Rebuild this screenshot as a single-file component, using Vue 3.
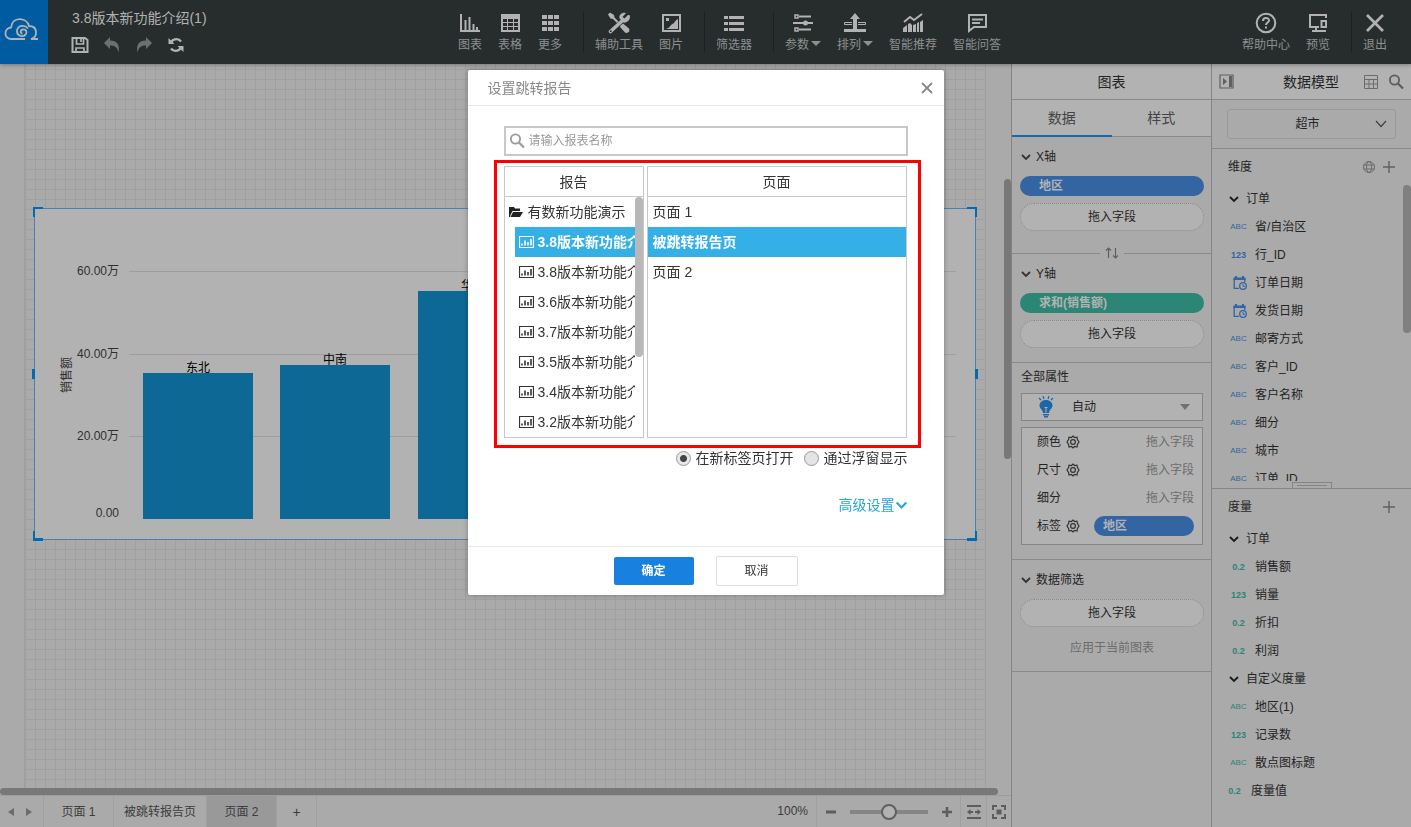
<script setup>
import { ref } from 'vue'

const keyword = ref('')
const openMode = ref('tab')
const model = ref('超市')
const mark = ref('自动')
const zoomLevel = ref(50)

const tools = [
  { label: '图表', icon: 'chart' },
  { label: '表格', icon: 'table' },
  { label: '更多', icon: 'more' },
  { divider: true },
  { label: '辅助工具', icon: 'wrench' },
  { label: '图片', icon: 'image' },
  { divider: true },
  { label: '筛选器', icon: 'filter' },
  { divider: true },
  { label: '参数', icon: 'params', caret: true },
  { label: '排列', icon: 'arrange', caret: true },
  { label: '智能推荐', icon: 'smart' },
  { label: '智能问答', icon: 'chat' },
]
const rightTools = [
  { label: '帮助中心', icon: 'help' },
  { label: '预览', icon: 'preview' },
  { divider: true },
  { label: '退出', icon: 'exit' },
]
const gridLines = [
  { y: 63, label: '60.00万' },
  { y: 146, label: '40.00万' },
  { y: 228, label: '20.00万' },
]
const bars = [
  { name: '东北', x: 108, top: 164 },
  { name: '中南', x: 245, top: 156 },
  { name: '华东', x: 383, top: 82 },
]
const reports = [
  '3.8版本新功能介绍',
  '3.8版本新功能介绍',
  '3.6版本新功能介绍',
  '3.7版本新功能介绍',
  '3.5版本新功能介绍',
  '3.4版本新功能介绍',
  '3.2版本新功能介绍',
]
const pages = ['页面 1', '被跳转报告页', '页面 2']
const dimensions = [
  { type: 'ABC', name: '省/自治区' },
  { type: '123', name: '行_ID' },
  { type: 'date', name: '订单日期' },
  { type: 'date', name: '发货日期' },
  { type: 'ABC', name: '邮寄方式' },
  { type: 'ABC', name: '客户_ID' },
  { type: 'ABC', name: '客户名称' },
  { type: 'ABC', name: '细分' },
  { type: 'ABC', name: '城市' },
  { type: 'ABC', name: '订单_ID' },
]
const orderMeasures = [
  { type: '0.2', name: '销售额' },
  { type: '123', name: '销量' },
  { type: '0.2', name: '折扣' },
  { type: '0.2', name: '利润' },
]
const customMeasures = [
  { type: 'ABC', name: '地区(1)' },
  { type: '123', name: '记录数' },
  { type: 'ABC', name: '散点图标题' },
]
const shelves = [
  { name: '颜色', gear: true },
  { name: '尺寸', gear: true },
  { name: '细分', gear: false },
  { name: '标签', gear: true, field: '地区' },
]
</script>

<template>
  <svg class="defs" aria-hidden="true">
    <symbol id="i-chart" viewBox="0 0 22 22">
      <path d="M2 2v17h19" fill="none" stroke="currentColor" stroke-width="2" />
      <path d="M6.500 8v10M10.500 5v13M14.500 12v6M18 15v3" stroke="currentColor" stroke-width="2" />
    </symbol>
    <symbol id="i-table" viewBox="0 0 22 22">
      <path fill-rule="evenodd" fill="currentColor" d="M2 2h19v18H2zM4 7v3h4V7zM9 7v3h5V7zM15 7v3h4V7zM4 11v3h4v-3zM9 11v3h5v-3zM15 11v3h4v-3zM4 15v3h4v-3zM9 15v3h5v-3zM15 15v3h4v-3z" />
    </symbol>
    <symbol id="i-more" viewBox="0 0 22 22">
      <path fill="currentColor" d="M3 3h5v4H3zM9 3h5v4H9zM15 3h5v4h-5zM3 9h5v4H3zM9 9h5v4H9zM15 9h5v4h-5zM3 15h5v4H3zM9 15h5v4H9zM15 15h5v4h-5z" />
    </symbol>
    <symbol id="i-wrench" viewBox="0 0 22 22">
      <path d="M0 2.500 2 .5l4 2.500.5 2.500 4 4L9 11 5 7l-2.500-.5z" fill="currentColor" />
      <path d="m12.500 13.500 2.500-2 6 5c1.500 2.500-1.500 5.500-4 4l-5-5.500z" fill="currentColor" />
      <path d="m2.500 19.500 12-11" stroke="currentColor" stroke-width="3.600" stroke-linecap="round" />
      <path d="M20 3 16.500 6.500 14.500 5 18 1c-4-1.500-7.500 2-6.500 5.500l4 4C19 11.500 23.500 7 21.500 3z" fill="currentColor" />
      <circle cx="2.800" cy="19.200" r=".9" fill="#272d2d" />
    </symbol>
    <symbol id="i-image" viewBox="0 0 22 22">
      <path d="M3 3h17v16H3z" fill="none" stroke="currentColor" stroke-width="2" />
      <path d="M6 6h3v3H6zM5 17c2 0 4-1 6-4 1-1 2-1 3-2 1-2 2-3 4-4v10z" fill="currentColor" />
    </symbol>
    <symbol id="i-filter" viewBox="0 0 22 22">
      <path fill="currentColor" d="M1 4h4v3H1zM6 4h15v3H6zM1 10h4v3H1zM6 10h15v3H6zM1 16h4v3H1zM6 16h15v3H6z" />
    </symbol>
    <symbol id="i-params" viewBox="0 0 22 22">
      <path d="M7 4.500h12M1 11h9M16 11h5M7 17.500h12" stroke="currentColor" stroke-width="2" />
      <path d="M3 3h3v3H3zM3 16h3v3H3z" fill="none" stroke="currentColor" stroke-width="1.500" />
      <path d="M9 11h12" stroke="currentColor" stroke-width="2" />
      <circle cx="13.500" cy="11" r="2.500" fill="currentColor" />
    </symbol>
    <symbol id="i-arrange" viewBox="0 0 22 22">
      <path fill="currentColor" d="m11 1 5 6h-3v10h9v3H0v-3h9V7H6z" />
      <path d="M8 10.500H.500v2H8M14 10.500h7.500v2H14" fill="none" stroke="currentColor" />
    </symbol>
    <symbol id="i-smart" viewBox="0 0 22 22">
      <path d="m2 10 6-5 4 3 8-6" fill="none" stroke="currentColor" stroke-width="2" />
      <path fill="currentColor" d="M1 16l4-3v7H1zM6 12l2-1 2 2v7H6zM11 13l3-1v8h-3zM15 11l2-1v10h-2zM18 10l3-2v12h-3z" />
    </symbol>
    <symbol id="i-chat" viewBox="0 0 22 22">
      <path d="M3 3h17v12H8l-5 4z" fill="none" stroke="currentColor" stroke-width="2" />
      <path d="M6 7.500h11M6 11h8" stroke="currentColor" stroke-width="2" />
    </symbol>
    <symbol id="i-help" viewBox="0 0 22 22">
      <circle cx="11" cy="11" r="9.300" fill="none" stroke="currentColor" stroke-width="2" />
      <path d="M8 9c0-4 6-4 6-.5 0 2-3 2-3 4.500M11 14.500v2" fill="none" stroke="currentColor" stroke-width="2" />
    </symbol>
    <symbol id="i-preview" viewBox="0 0 22 22">
      <path d="M19 6V3H3v12h9M9 15v4M5 19h8" fill="none" stroke="currentColor" stroke-width="2" />
      <path d="M14.500 9H19v6h-4.500zM12 19h7" fill="none" stroke="currentColor" stroke-width="2" />
    </symbol>
    <symbol id="i-exit" viewBox="0 0 22 22">
      <path d="m3 3 16 16M19 3 3 19" stroke="currentColor" stroke-width="2.700" />
    </symbol>
    <symbol id="i-chevron" viewBox="0 0 10 10">
      <path d="m1 3 4 4 4-4" fill="none" stroke="currentColor" stroke-width="1.800" />
    </symbol>
    <symbol id="i-search" viewBox="0 0 16 16">
      <circle cx="6.500" cy="6" r="4.600" fill="none" stroke="currentColor" stroke-width="1.800" />
      <path d="m10 9.500 5 5" stroke="currentColor" stroke-width="2.200" />
    </symbol>
    <symbol id="i-plus" viewBox="0 0 12 12">
      <path d="M6 0v12M0 6h12" stroke="currentColor" stroke-width="1.400" />
    </symbol>
    <symbol id="i-date" viewBox="0 0 14 14">
      <path d="M6 12.400H1.200V3h10.600v3" fill="none" stroke="currentColor" stroke-width="1.300" />
      <path d="M.5 1.500H2V0h2v1.500h5V0h2v1.500h1.500V4H.5z" fill="currentColor" />
      <circle cx="10" cy="10" r="3.300" fill="none" stroke="currentColor" stroke-width="1.300" />
      <path d="M10 8v2.300h2" fill="none" stroke="currentColor" />
    </symbol>
    <symbol id="i-gear" viewBox="0 0 14 14">
      <path d="m7 1 1.500 1.500 2.500-.4.400 2.400L13 7l-1.600 2.500L11 12l-2.500-.5L7 13l-1.500-1.500L3 12l-.4-2.500L1 7l1.600-2.500.4-2.400 2.500.4z" fill="none" stroke="currentColor" stroke-width="1.200" />
      <circle cx="7" cy="7" r="2.400" fill="none" stroke="currentColor" stroke-width="1.200" />
    </symbol>
    <symbol id="i-report" viewBox="0 0 15 12">
      <path d="M.5.5h14v11H.5z" fill="none" stroke="currentColor" stroke-width="1.200" />
      <path d="M3 9.500v-2M6 9.500v-5M9 9.500V6M12 9.500V3" stroke="currentColor" stroke-width="1.600" />
    </symbol>
  </svg>

  <div class="app">
    <header class="topbar">
      <a class="logo" href="#" aria-label="首页">
        <svg width="36" height="24" viewBox="0 0 36 24" fill="none" stroke="#b2b2b2" stroke-width="1.800">
          <path d="M21 21H7.500C-.5 20.500-.5 10.500 7 9.500 8-1.500 22.500-1.500 25 8c8.500 0 9.500 10.500 2 13h7" />
          <path d="M24 10.500c-3-4-10-3.500-11 2-.5 5.500 6.500 7.500 9 3.500 1.500-2.500-.5-5-3-4.500-3 .5-3 4-.5 4" />
        </svg>
      </a>
      <div class="title-area">
        <div class="title">3.8版本新功能介绍(1)</div>
        <div class="quick">
          <button aria-label="保存">
            <svg width="18" height="18" viewBox="0 0 18 18" fill="none" stroke="#b2b2b2" stroke-width="2">
              <path d="M1.500 2H14l2.500 2v12h-15z" /><path d="M5.500 2v6h7V2M5 16v-4h8v4M10 3v3" stroke-width="1.700" />
            </svg>
          </button>
          <button aria-label="撤销">
            <svg width="18" height="18" viewBox="0 0 18 18"><path d="m1 7 6-6v3.500c7 0 10 4 8.500 12C14 11 12 9.500 7 9.500V13z" fill="#6c7070" /></svg>
          </button>
          <button aria-label="重做">
            <svg width="18" height="18" viewBox="0 0 18 18"><path d="m17 7-6-6v3.500c-7 0-10 4-8.500 12C4 11 6 9.500 11 9.500V13z" fill="#6c7070" /></svg>
          </button>
          <button aria-label="刷新">
            <svg width="18" height="18" viewBox="0 0 18 18">
              <path d="M4 8c0-5 7-6.500 10-2.500M14 10c0 5-7 6.500-10 2.500" fill="none" stroke="#b2b2b2" stroke-width="2.400" />
              <path d="M1.500 2v6h6zM16.500 16v-6h-6z" fill="#b2b2b2" />
            </svg>
          </button>
        </div>
      </div>
      <nav class="tools">
        <template v-for="(t, i) in tools" :key="i">
          <i v-if="t.divider" class="divider"></i>
          <button v-else class="tool">
            <svg width="22" height="22"><use :href="'#i-' + t.icon" /></svg>
            <span>{{ t.label }}<i v-if="t.caret" class="caret"></i></span>
          </button>
        </template>
      </nav>
      <nav class="tools right">
        <template v-for="(t, i) in rightTools" :key="i">
          <i v-if="t.divider" class="divider"></i>
          <button v-else class="tool">
            <svg width="22" height="22"><use :href="'#i-' + t.icon" /></svg>
            <span>{{ t.label }}</span>
          </button>
        </template>
      </nav>
    </header>

    <div class="body">
      <main class="workspace">
        <div class="canvas">
          <div class="sheet">
            <div class="widget">
              <svg class="plot" width="922" height="330">
                <g v-for="l in gridLines" :key="l.y">
                  <line x1="94" x2="921" :y1="l.y - 0.5" :y2="l.y - 0.5" stroke="#9e9e9e" />
                  <text x="84" :y="l.y + 3" text-anchor="end">{{ l.label }}</text>
                </g>
                <text x="84" y="308" text-anchor="end">0.00</text>
                <text transform="translate(36 166) rotate(-90)" text-anchor="middle">销售额</text>
                <g v-for="b in bars" :key="b.name">
                  <text class="cat" :x="b.x + 55" :y="b.top - 1" text-anchor="middle">{{ b.name }}</text>
                  <rect :x="b.x" :y="b.top" width="110" :height="310 - b.top" fill="#0d6895" />
                </g>
              </svg>
              <i class="handle tl"></i><i class="handle tr"></i><i class="handle bl"></i><i class="handle br"></i>
              <i class="handle ml"></i><i class="handle mr"></i>
            </div>
          </div>
          <i class="vthumb"></i>
          <i class="hthumb"></i>
        </div>
        <footer class="pagebar">
          <div class="arrows">
            <button aria-label="上一页"><svg width="6" height="8"><path d="M6 0v8L0 4z" fill="#6c6c6c" /></svg></button>
            <button aria-label="下一页"><svg width="6" height="8"><path d="M0 0v8l6-4z" fill="#6c6c6c" /></svg></button>
          </div>
          <button v-for="(p, i) in pages" :key="p" class="page" :class="{ active: i === 2 }">{{ p }}</button>
          <button class="page add" aria-label="新增页面">+</button>
          <span class="percent">100%</span>
          <div class="zoom">
            <button aria-label="缩小"><svg width="10" height="10"><path d="M0 5h10" stroke="#5d5d5d" stroke-width="3" /></svg></button>
            <input v-model="zoomLevel" type="range" min="0" max="100" aria-label="缩放比例" />
            <button aria-label="放大"><svg width="10" height="10"><path d="M0 5h10M5 0v10" stroke="#5d5d5d" stroke-width="2.500" /></svg></button>
          </div>
          <button class="fit" aria-label="适应宽度">
            <svg width="14" height="14" viewBox="0 0 14 14" fill="none" stroke="#5d5d5d"><path d="M0 1h14M0 13h14" stroke-width="2" /><path d="M1 7h5M8 7h5" stroke-width="1.800" /><path d="M3.500 4 0 7l3.500 3zM10.500 4 14 7l-3.500 3z" fill="#5d5d5d" stroke="none" /></svg>
          </button>
          <button class="fit" aria-label="适应页面">
            <svg width="14" height="14" viewBox="0 0 14 14" fill="none" stroke="#5d5d5d" stroke-width="2"><path d="M1 5V1h4M9 1h4v4M13 9v4H9M5 13H1V9" /><path d="M4.500 4.500h5v5h-5z" fill="#5d5d5d" stroke="none" /></svg>
          </button>
        </footer>
      </main>

      <aside class="side">
        <h2 class="side-head">图表</h2>
        <div class="tabs">
          <button class="active">数据</button>
          <button>样式</button>
        </div>
        <section class="axis">
          <h3><svg width="10" height="10"><use href="#i-chevron" /></svg>X轴</h3>
          <button class="pill blue">地区</button>
          <div class="drop">拖入字段</div>
        </section>
        <div class="swap">
          <button aria-label="交换坐标轴">
            <svg width="14" height="12" viewBox="0 0 14 12" fill="none" stroke="#606060"><path d="M3.500 11V1M1 3.500 3.500 1 6 3.500M10.500 1v10M8 8.500l2.500 2.500L13 8.500" stroke-width="1.200" /></svg>
          </button>
        </div>
        <section class="axis y">
          <h3><svg width="10" height="10"><use href="#i-chevron" /></svg>Y轴</h3>
          <button class="pill green">求和(销售额)</button>
          <div class="drop">拖入字段</div>
        </section>
        <section class="props">
          <label for="mark">全部属性</label>
          <div class="mark">
            <select id="mark" v-model="mark"><option>自动</option></select>
            <svg class="bulb" width="16" height="22" viewBox="0 0 16 22">
              <path d="m1 2 2 2M15 2l-2 2M5 0l1 3M11 0l-1 3" stroke="#1a66a8" stroke-width="1.200" />
              <path d="M8 4c4 0 6.500 2.500 6.500 5.500S11 14 11 17H5c0-3-3.500-4.500-3.500-7.500S4 4 8 4zM5 18h6v1.500H5zM6 20h4v1.500H6z" fill="#1a66a8" />
              <path d="M6.500 11.500h3M8 12v4.500" stroke="#b2b2b2" />
            </svg>
            <i class="caret"></i>
          </div>
          <div class="shelves">
            <div v-for="s in shelves" :key="s.name" class="shelf">
              <span class="shelf-name">{{ s.name }}</span>
              <button v-if="s.gear" class="gear" :aria-label="s.name + '设置'"><svg width="14" height="14"><use href="#i-gear" /></svg></button>
              <button v-if="s.field" class="pill blue small">{{ s.field }}</button>
              <span v-else class="hint">拖入字段</span>
            </div>
          </div>
        </section>
        <section class="filters">
          <h3><svg width="10" height="10"><use href="#i-chevron" /></svg>数据筛选</h3>
          <div class="drop">拖入字段</div>
          <p>应用于当前图表</p>
        </section>
      </aside>

      <aside class="side model">
        <div class="side-head model-head">
          <button aria-label="收起">
            <svg width="15" height="15" viewBox="0 0 15 15"><path d="M1 1h13v13H1z" fill="none" stroke="#606060" stroke-width="1.200" /><path d="M4 4v7l4-3.500zM10 2h3v11h-3z" fill="#606060" /></svg>
          </button>
          <h2>数据模型</h2>
          <button aria-label="数据表">
            <svg width="14" height="14" viewBox="0 0 14 14" fill="none" stroke="#6c6c6c"><path d="M.5.5h13v13H.5zM0 4.500h14M0 9h14M5 4.500v9M9.500 4.500v9" /></svg>
          </button>
          <button aria-label="搜索"><svg width="16" height="16"><use href="#i-search" /></svg></button>
        </div>
        <div class="source">
          <select v-model="model" aria-label="数据模型"><option>超市</option></select>
          <svg width="12" height="8" viewBox="0 0 12 8"><path d="m1 1 5 5.500L11 1" fill="none" stroke="#404040" stroke-width="1.200" /></svg>
        </div>
        <section class="fields dims">
          <div class="fields-head">
            <h3>维度</h3>
            <button aria-label="地理字段">
              <svg width="12" height="12" viewBox="0 0 12 12" fill="none" stroke="#6c6c6c"><circle cx="6" cy="6" r="5.500" /><ellipse cx="6" cy="6" rx="2.500" ry="5.500" /><path d="M.5 4h11M.5 8h11" /></svg>
            </button>
            <button aria-label="新增维度"><svg width="12" height="12"><use href="#i-plus" /></svg></button>
          </div>
          <div class="scroll">
            <div class="folder"><svg width="10" height="10"><use href="#i-chevron" /></svg>订单</div>
            <div v-for="d in dimensions" :key="d.name" class="field">
              <svg v-if="d.type === 'date'" class="date" width="14" height="14"><use href="#i-date" /></svg>
              <b v-else :class="{ abc: d.type === 'ABC' }">{{ d.type }}</b>
              <span>{{ d.name }}</span>
            </div>
          </div>
          <i class="dthumb"></i>
          <i class="grip"></i>
        </section>
        <section class="fields meas">
          <div class="fields-head">
            <h3>度量</h3>
            <button aria-label="新增度量"><svg width="12" height="12"><use href="#i-plus" /></svg></button>
          </div>
          <div class="folder"><svg width="10" height="10"><use href="#i-chevron" /></svg>订单</div>
          <div v-for="d in orderMeasures" :key="d.name" class="field"><b>{{ d.type }}</b><span>{{ d.name }}</span></div>
          <div class="folder"><svg width="10" height="10"><use href="#i-chevron" /></svg>自定义度量</div>
          <div v-for="d in customMeasures" :key="d.name" class="field"><b :class="{ abc: d.type === 'ABC' }">{{ d.type }}</b><span>{{ d.name }}</span></div>
          <div class="field top"><b>0.2</b><span>度量值</span></div>
        </section>
      </aside>
    </div>

    <div class="backdrop">
      <div class="dialog" role="dialog" aria-labelledby="dlg-title">
        <div class="dlg-head">
          <h2 id="dlg-title">设置跳转报告</h2>
          <button aria-label="关闭"><svg width="12" height="12" viewBox="0 0 12 12"><path d="m1 1 10 10M11 1 1 11" stroke="#888" stroke-width="1.800" /></svg></button>
        </div>
        <div class="dlg-body">
          <div class="search">
            <svg width="16" height="16"><use href="#i-search" /></svg>
            <input v-model="keyword" type="text" placeholder="请输入报表名称" aria-label="报表名称" />
          </div>
          <div class="pick">
            <div class="col reports">
              <h3>报告</h3>
              <div class="list">
                <div class="root">
                  <svg width="14" height="12" viewBox="0 0 14 12"><path d="M0 11V1h5l1 1.500h5V5H3.500L1.500 9 1 11zM4 6h10l-3 5H1.500z" fill="#222" /></svg>
                  有数新功能演示
                </div>
                <button v-for="(r, i) in reports" :key="i" class="report" :class="{ active: i === 0 }">
                  <svg width="15" height="12"><use href="#i-report" /></svg>{{ r }}
                </button>
              </div>
              <i class="lthumb"></i>
            </div>
            <div class="col pages">
              <h3>页面</h3>
              <button v-for="(p, i) in pages" :key="p" class="pg" :class="{ active: i === 1 }">{{ p }}</button>
            </div>
          </div>
          <div class="modes">
            <label><input v-model="openMode" type="radio" name="mode" value="tab" />在新标签页打开</label>
            <label><input v-model="openMode" type="radio" name="mode" value="float" />通过浮窗显示</label>
          </div>
          <a class="advanced" href="#">高级设置<svg width="13" height="12" viewBox="0 0 10 10"><use href="#i-chevron" /></svg></a>
        </div>
        <div class="dlg-foot">
          <button class="ok">确定</button>
          <button class="cancel">取消</button>
        </div>
      </div>
    </div>
  </div>
</template>

<style>
html, body { height: 100%; overflow: hidden; }
</style>

<style scoped>
* { box-sizing: border-box; }
.defs { position: absolute; width: 0; height: 0; }
.app {
  height: 100vh;
  display: flex;
  flex-direction: column;
  font: 12px/20px "Liberation Sans", "Noto Sans CJK SC", sans-serif;
  color: #242424;
  background: #aaa;
}
button, input, select { font: inherit; color: inherit; margin: 0; }
button { background: none; border: 0; padding: 0; cursor: pointer; }
h2, h3, p { margin: 0; font-weight: normal; }
h3 { font-size: 12px; }
svg { display: block; flex: none; }

.topbar { display: flex; flex: none; height: 64px; background: #272d2d; color: #8d9090; position: relative; z-index: 1; box-shadow: 0 1px 4px rgba(0, 0, 0, 0.3); }
.logo { flex: none; width: 48px; background: #005ba1; display: flex; align-items: center; justify-content: center; padding: 0 4px 4px 0; }
.title-area { flex: 1 1 402px; padding: 8px 0 0 24px; }
.title { font-size: 14px; color: #b2b2b2; }
.quick { display: flex; gap: 14px; margin: 8px 0 0 -1px; }
.tools { display: flex; align-items: flex-start; padding-top: 12px; }
.tools.right { flex: 1 1 402px; justify-content: flex-end; padding-right: 16px; }
.tool { padding: 0 8px; display: flex; flex-direction: column; align-items: center; gap: 1px; line-height: 20px; white-space: nowrap; }
.tool svg { color: #b2b2b2; }
.tool span { display: flex; align-items: center; }
.divider { width: 1px; height: 40px; margin: 0 3px 0 13px; background: #1b2020; }
.caret { width: 0; height: 0; border: 5px solid transparent; border-top-color: currentColor; border-bottom-width: 0; }
.tool .caret { margin: 0 0 4px 2px; }

.body { flex: 1; display: flex; min-height: 0; }
.workspace { flex: 1; min-width: 0; display: flex; flex-direction: column; }
.canvas { flex: 1; min-height: 0; position: relative; overflow: hidden; display: flex; }
.sheet {
  flex: 1;
  margin: 0 25px 0 24px;
  padding: 144px 9px 0;
  border: 1px solid #9f9f9f;
  border-width: 0 1px;
  background-image: linear-gradient(#a0a0a0 1px, transparent 1px), linear-gradient(90deg, #a0a0a0 1px, transparent 1px);
  background-size: 10px 10px;
  background-position: 0 5px;
}
.widget { position: relative; height: 332px; background: #b2b2b2; border: 1px solid #4d80b2; }
.plot { font-size: 12px; fill: #303030; }
.cat { fill: #000; }
.handle { position: absolute; width: 10px; height: 10px; border: 0 solid #006ab5; }
.tl { left: -2px; top: -2px; border-width: 2px 0 0 2px; }
.tr { right: -2px; top: -2px; border-width: 2px 2px 0 0; }
.bl { left: -2px; bottom: -2px; border-width: 0 0 3px 2px; }
.br { right: -2px; bottom: -2px; border-width: 0 2px 3px 0; }
.ml, .mr { width: 3px; top: 160px; background: #006ab5; }
.ml { left: -3px; }
.mr { right: -3px; }
.vthumb { position: absolute; right: 0; top: 115px; width: 7px; height: 280px; border-radius: 4px; background: #787878; }
.hthumb { position: absolute; left: 0; right: 13px; bottom: 0; height: 7px; border-radius: 4px; background: #787878; }

.pagebar { flex: none; height: 32px; display: flex; align-items: stretch; border-top: 1px solid #9e9e9e; color: #3c3c3c; }
.arrows { width: 44px; display: flex; align-items: center; justify-content: center; gap: 12px; padding-right: 4px; border-right: 1px solid #a0a0a0; }
.page { min-width: 70px; padding: 0 10px; border-right: 1px solid #a0a0a0; }
.page.active { background: #999; }
.page.add { min-width: 40px; font-size: 14px; }
.percent { margin-left: auto; padding: 5px 8px 0 0; }
.zoom { display: flex; align-items: center; gap: 14px; width: 145px; justify-content: center; border: 1px solid #a0a0a0; border-width: 0 1px; }
.zoom input { appearance: none; width: 78px; height: 16px; background: linear-gradient(#858585, #858585) center / 100% 4px no-repeat; }
.zoom input::-webkit-slider-thumb { appearance: none; width: 16px; height: 16px; border: 2px solid #606060; border-radius: 50%; background: #b2b2b2; }
.fit { width: 25px; display: flex; align-items: center; justify-content: center; }
.fit + .fit { border-left: 1px solid #a0a0a0; }

.side { flex: none; width: 200px; border-left: 1px solid #858585; background: #aaa; overflow: hidden; }
.side-head { height: 36px; background: #b2b2b2; border-bottom: 1px solid #8a8a8a; font-size: 14px; line-height: 36px; text-align: center; }
.tabs { display: flex; height: 37px; background: #b2b2b2; border-bottom: 1px solid #8a8a8a; }
.tabs button { flex: 1; height: 37px; font-size: 14px; color: #444; border-bottom: 2px solid transparent; }
.tabs .active { border-color: #1669ab; }
.axis { padding: 10px 7px 0 8px; height: 106px; }
.axis h3, .filters h3 { display: flex; align-items: center; gap: 5px; padding-left: 1px; height: 20px; }
.axis h3 svg, .filters h3 svg { color: #333; }
.pill { display: block; width: 100%; height: 20px; margin-top: 9px; padding-left: 19px; border-radius: 10px; text-align: left; font-weight: bold; line-height: 20px; color: #b2b2b2; }
.blue { background: #3465a3; }
.green { background: #2b8675; }
.drop { height: 28px; margin-top: 7px; border: 1px dotted #8a8a8a; border-radius: 14px; background: #b2b2b2; text-align: center; line-height: 26px; }
.swap { height: 20px; display: flex; align-items: center; gap: 5px; }
.swap::before, .swap::after { content: ""; flex: 1; height: 1px; background: #8a8a8a; }
.axis.y { padding-top: 1px; height: 100px; border-bottom: 1px solid #8a8a8a; }
.props { padding: 4px 8px 14px 9px; border-bottom: 1px solid #8a8a8a; }
.props label { display: block; }
.mark { position: relative; margin-top: 6px; }
.mark select { appearance: none; display: block; width: 100%; height: 28px; padding-left: 50px; border: 1px solid #858585; border-radius: 0; background: #b2b2b2; }
.bulb { position: absolute; left: 17px; top: 3px; pointer-events: none; }
.mark .caret { position: absolute; right: 13px; top: 11px; border-top-width: 6px; color: #707070; }
.shelves { margin-top: 6px; padding: 0 8px 4px 15px; border: 1px solid #858585; background: #b2b2b2; }
.shelf { display: flex; align-items: center; height: 28px; }
.shelf-name { width: 24px; }
.gear { margin-left: 5px; color: #333; }
.shelf .hint { margin-left: auto; color: #6c6c6c; }
.pill.small { width: 100px; margin: 0 0 0 auto; padding-left: 9px; }
.filters { padding: 10px 7px 13px 8px; border-bottom: 1px solid #8a8a8a; }
.filters .drop { margin-top: 9px; }
.filters p { margin-top: 11px; color: #6c6c6c; text-align: center; }

.model { display: flex; flex-direction: column; }
.model-head { flex: none; display: flex; align-items: center; padding: 0 7px; gap: 10px; color: #5d5d5d; }
.model-head h2 { flex: 1; font-size: 14px; line-height: 36px; color: #242424; padding-left: 24px; }
.source { flex: none; position: relative; padding: 9px 15px; border-bottom: 1px solid #8a8a8a; }
.source select { appearance: none; display: block; width: 100%; height: 30px; border: 1px solid #999; border-radius: 3px; background: #aaa; text-align: center; text-align-last: center; padding: 0 8px 0 0; }
.source svg { position: absolute; right: 24px; top: 20px; pointer-events: none; }
.fields { position: relative; }
.fields-head { display: flex; align-items: center; gap: 8px; height: 36px; padding: 0 16px; color: #606060; }
.fields-head h3 { flex: 1; color: #242424; }
.dims { flex: none; height: 340px; border-bottom: 1px solid #858585; }
.scroll { height: 296px; overflow: hidden; }
.folder { display: flex; align-items: center; gap: 7px; height: 28px; padding-left: 17px; }
.folder svg { color: #1a1a1a; }
.field { display: flex; align-items: center; height: 28px; padding-left: 16px; }
.field b { width: 21px; text-align: center; font: bold 9px/20px "Liberation Sans", sans-serif; }
.field .abc { font-size: 8px; font-weight: normal; }
.field span { margin-left: 6px; }
.field .date { margin: 0 2px 0 5px; }
.dims b, .date { color: #3465a3; }
.meas b { color: #2b8675; }
.field.top { padding-left: 12px; }
.dthumb { position: absolute; right: 0; top: 36px; width: 8px; height: 148px; border-radius: 4px; background: #808080; }
.grip { position: absolute; left: 80px; bottom: 0; width: 40px; height: 6px; border: 1px solid #858585; border-bottom: 0; background: linear-gradient(#858585, #858585) center 2px / 30px 1px no-repeat #aaa; }

.backdrop { position: fixed; inset: 0; z-index: 2; display: flex; justify-content: center; align-items: flex-start; padding-top: 70px; }
.dialog { width: 476px; background: #fff; border-radius: 2px; box-shadow: 0 0 5px rgba(0, 0, 0, 0.3); color: #333; font-size: 14px; }
.dlg-head { display: flex; align-items: center; justify-content: space-between; height: 36px; padding: 0 11px 0 20px; border-bottom: 1px solid #e8e8e8; color: #888; }
.dlg-head h2 { font-size: 14px; }
.dlg-body { padding: 20px 36px 0; height: 440px; }
.search { display: flex; align-items: center; gap: 4px; height: 30px; padding: 0 4px 0 3px; border: 2px solid #c8c8c8; color: #999; }
.search input { flex: 1; min-width: 0; border: 0; outline: 0; padding: 0; font-size: 12px; color: #333; }
.search input::placeholder { color: #999; }
.pick { display: flex; gap: 3px; height: 288px; margin: 4px -13px 0 -10px; padding: 3px 11px 7px 7px; border: 3px solid #f00; }
.col { position: relative; border: 1px solid #c8c8c8; }
.reports { width: 140px; }
.pages { flex: 1; }
.col h3 { height: 30px; border-bottom: 1px solid #c8c8c8; text-align: center; font-size: 14px; line-height: 30px; }
.list { width: 130px; height: 240px; overflow: hidden; }
.root { display: flex; align-items: center; gap: 5px; height: 30px; padding-left: 4px; white-space: nowrap; }
.report { display: flex; align-items: center; gap: 4px; width: 120px; height: 30px; margin-left: 10px; padding-left: 4px; overflow: hidden; white-space: nowrap; }
.pg { display: block; width: 100%; height: 30px; padding-left: 5px; text-align: left; }
.report.active, .pg.active { background: #34b0e7; color: #fff; font-weight: bold; }
.lthumb { position: absolute; right: 0; top: 30px; width: 8px; height: 160px; border-radius: 4px; background: #b8b8b8; }
.modes { display: flex; justify-content: flex-end; gap: 10px; }
.modes label { display: flex; align-items: center; gap: 5px; white-space: nowrap; }
.modes input { appearance: none; width: 15px; height: 15px; border: 1px solid #999; border-radius: 50%; background: #e4e4e4; }
.modes input:checked { background: radial-gradient(circle, #444 0 3px, #e8e8e8 4px); }
.advanced { display: flex; align-items: center; justify-content: flex-end; margin-top: 27px; color: #27a5dd; text-decoration: none; }
.dlg-foot { display: flex; justify-content: center; align-items: center; gap: 22px; height: 49px; border-top: 1px solid #e8e8e8; font-size: 12px; }
.dlg-foot button { border-radius: 2px; }
.ok { width: 80px; height: 28px; background: #1881df; color: #fff; font-weight: bold; }
.cancel { width: 82px; height: 30px; border: 1px solid #ddd; }
</style>
